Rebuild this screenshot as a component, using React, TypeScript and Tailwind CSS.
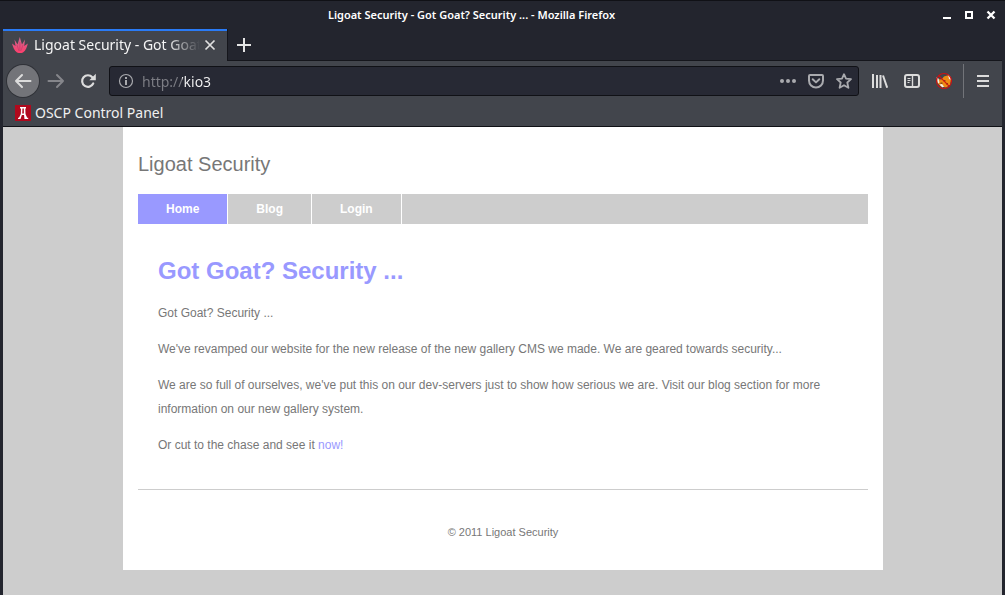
import type { ReactNode } from "react";

const chromeFont = "font-['Noto_Sans',sans-serif]";

function IconButton({ label, className = "", children }: { label: string; className?: string; children: ReactNode }) {
  return (
    <button type="button" aria-label={label} className={`flex h-8 w-8 shrink-0 items-center justify-center ${className}`}>
      {children}
    </button>
  );
}

function TitleBar() {
  return (
    <header className="relative flex h-7 items-center justify-end border-t border-[#101116] pr-[3px]">
      <h1 className="absolute inset-x-0 pr-[62px] text-center text-[11px] leading-4 font-semibold text-white">
        Ligoat Security - Got Goat? Security ... - Mozilla Firefox
      </h1>
      <div className="relative flex text-white">
        <button type="button" aria-label="Minimize" className="flex h-6 w-[22px] items-center justify-center">
          <svg width="10" height="10" viewBox="0 0 10 10"><path d="M1 7h8v2H1z" fill="currentColor" /></svg>
        </button>
        <button type="button" aria-label="Maximize" className="flex h-6 w-[22px] items-center justify-center">
          <svg width="10" height="10" viewBox="0 0 10 10"><path d="M2 2h6v6H2z" fill="none" stroke="currentColor" strokeWidth="2" /></svg>
        </button>
        <button type="button" aria-label="Close window" className="flex h-6 w-[22px] items-center justify-center">
          <svg width="10" height="10" viewBox="0 0 10 10"><path d="M1.500 1.500l7 7M8.500 1.500l-7 7" fill="none" stroke="currentColor" strokeWidth="2.300" /></svg>
        </button>
      </div>
    </header>
  );
}

function TabStrip() {
  return (
    <div className="flex h-8">
      <div className="flex w-56 items-center border-t-2 border-[#2a7bf6] bg-[#42454c] pr-[7px] pb-0.5 pl-2">
        <svg width="18" height="18" viewBox="0 0 18 18" className="shrink-0">
          <defs>
            <linearGradient id="lotus" x1="0" y1="0" x2="0" y2="1">
              <stop offset="0" stopColor="#c9688f" />
              <stop offset="1" stopColor="#ff3e6c" />
            </linearGradient>
          </defs>
          <path
            d="M6 16.500C3 14.500 2 10.500 1 7.500L4.500 10L3.500 3.500L6.500 8.500L8.800 1L11 8.500L14 3.500L13.200 10L16.800 7.500C16 10.500 15 14.500 12 16.500C10 17.200 8 17.200 6 16.500Z"
            fill="url(#lotus)"
          />
          <path d="M6 9l2 6M8.900 6v9M12 9l-2.200 6" stroke="#b83a6a" strokeWidth=".6" fill="none" />
        </svg>
        <span className="ml-[5px] min-w-0 flex-1 overflow-hidden mask-r-from-80% mask-r-to-100% text-[14px] leading-5 whitespace-nowrap text-[#f5f5f5]">
          Ligoat Security - Got Goat? Security ...
        </span>
        <button type="button" aria-label="Close tab" className="flex h-6 w-5 shrink-0 items-center justify-center text-[#e0e0e0]">
          <svg width="12" height="12" viewBox="0 0 12 12"><path d="M1.500 1.500l9 9M10.500 1.500l-9 9" stroke="currentColor" strokeWidth="1.700" fill="none" /></svg>
        </button>
      </div>
      <div className="flex flex-1 border-b border-l border-[#15161c]">
        <IconButton label="New tab" className="text-[#e5e5e5]">
          <svg width="14" height="14" viewBox="0 0 14 14"><path d="M7 0v14M0 7h14" stroke="currentColor" strokeWidth="2" /></svg>
        </IconButton>
      </div>
    </div>
  );
}

function AddressBar() {
  return (
    <form className="ml-[5px] flex h-[30px] min-w-0 flex-1 items-center rounded-[3px] border border-[#101116] bg-[#272934] text-[#a9aaae]" onSubmit={(e) => e.preventDefault()}>
      <button type="button" aria-label="Site information" className="flex w-8 shrink-0 justify-center">
        <svg width="16" height="16" viewBox="0 0 16 16">
          <circle cx="8" cy="8" r="6.500" fill="none" stroke="currentColor" strokeWidth="1.200" />
          <path d="M7 4h2v2H7zM7 7h2v5H7z" fill="currentColor" />
        </svg>
      </button>
      <input
        aria-label="Address"
        defaultValue="http://kio3"
        className="h-7 min-w-0 flex-1 bg-[linear-gradient(to_right,#7d7e85_40px,#f5f5f6_40px)] bg-clip-text text-[14px] leading-5 text-transparent outline-none"
      />
      <div className="flex items-center">
        <button type="button" aria-label="Page actions" className="flex h-7 w-7 items-center justify-center">
          <svg width="16" height="16" viewBox="0 0 16 16" fill="currentColor"><circle cx="2" cy="8" r="2" /><circle cx="8" cy="8" r="2" /><circle cx="14" cy="8" r="2" /></svg>
        </button>
        <button type="button" aria-label="Save to Pocket" className="flex h-7 w-7 items-center justify-center">
          <svg width="16" height="16" viewBox="0 0 16 16" fill="none" stroke="currentColor" strokeWidth="2">
            <path d="M2 2h12a1 1 0 0 1 1 1v4.500a7 7 0 0 1-14 0V3a1 1 0 0 1 1-1z" />
            <path d="M4.700 6.200L8 9.400l3.300-3.200" strokeLinecap="round" strokeLinejoin="round" />
          </svg>
        </button>
        <button type="button" aria-label="Bookmark this page" className="flex h-7 w-7 items-center justify-center">
          <svg width="16" height="16" viewBox="0 0 16 16" fill="none" stroke="currentColor" strokeWidth="1.800" strokeLinejoin="round">
            <path d="M8 1.200l2 4.500 5 .5-3.700 3.300 1.100 5.300L8 12.200l-4.400 2.600 1.100-5.300L1 6.200l5-.5z" />
          </svg>
        </button>
      </div>
    </form>
  );
}

function FoxIcon() {
  return (
    <svg width="18" height="18" viewBox="0 0 18 18">
      <path d="M2.500 7l4 .5L9 4.500 14 3l2 5-1 5-4 2.500-5-1L2.500 11z" fill="#ee8a14" />
      <path d="M1.500 5l2 1.500 1 4-1.500 1zM13 2.500l2 1.500 1.300 4-2.300-1zM4.500 12.500l2.500-.5 2 2.500-1.500 1z" fill="#f2efe9" />
      <path d="M8.500 8h2v1.500h-2zM5.500 10.500h2v1.500h-2zM11 11h2v1.500h-2z" fill="#8a4a12" />
      <circle cx="9" cy="9" r="7.500" fill="none" stroke="#cf1111" strokeWidth="1.100" />
      <path d="M3.700 3.700l10.600 10.600" stroke="#cf1111" strokeWidth="1.100" />
    </svg>
  );
}

function Toolbar() {
  return (
    <div className="flex h-10 items-center bg-[#42454c] pr-[3px] pl-1 text-[#dcdcdc]">
      <IconButton label="Back" className="rounded-full bg-[#737479] ring-1 ring-[#303238]">
        <svg width="18" height="16" viewBox="0 0 18 16" fill="none" stroke="currentColor" strokeWidth="2" strokeLinecap="round" strokeLinejoin="round"><path d="M8 2L2 8l6 6M2 8h14.500" /></svg>
      </IconButton>
      <IconButton label="Forward" className="ml-px text-[#85868b]">
        <svg width="18" height="16" viewBox="0 0 18 16" fill="none" stroke="currentColor" strokeWidth="2" strokeLinecap="round" strokeLinejoin="round"><path d="M10 2l6 6-6 6M16 8H1.500" /></svg>
      </IconButton>
      <IconButton label="Reload">
        <svg width="16" height="16" viewBox="0 0 16 16"><path d="M13.200 10.500A5.800 5.800 0 1 1 12.300 4.200" fill="none" stroke="currentColor" strokeWidth="2.200" strokeLinecap="round" /><path d="M15.800 .8v6.400H9.300z" fill="currentColor" /></svg>
      </IconButton>
      <AddressBar />
      <div className="flex items-center pl-[5px]">
        <IconButton label="Library">
          <svg width="16" height="16" viewBox="0 0 16 16" fill="none" stroke="currentColor" strokeWidth="2"><path d="M1 1v14M5 2v13M8.500 2v13M11 2.500l4.200 12.300" /></svg>
        </IconButton>
        <IconButton label="Sidebars">
          <svg width="16" height="16" viewBox="0 0 16 16" fill="none" stroke="currentColor"><rect x="1" y="2" width="14" height="12" rx="2" strokeWidth="2" /><path d="M8.500 2v12" strokeWidth="1.400" /><path d="M3.500 5.500h3M3.500 7.500h3M3.500 9.500h2" strokeWidth="1" /></svg>
        </IconButton>
        <IconButton label="Proxy settings"><FoxIcon /></IconButton>
        <div className="ml-[3px] h-[34px] w-px bg-[#727479]" />
        <IconButton label="Open menu" className="ml-[3px]">
          <svg width="12" height="12" viewBox="0 0 12 12"><path d="M0 1h12M0 6h12M0 11h12" stroke="currentColor" strokeWidth="2" /></svg>
        </IconButton>
      </div>
    </div>
  );
}

function BookmarksBar() {
  return (
    <nav aria-label="Bookmarks" className="flex h-[26px] items-center border-b border-[#101116] bg-[#42454c] pb-0.5 pl-3">
      <a href="#oscp" className="flex items-center gap-1 text-[14px] leading-5 text-[#f0f0f0]">
        <svg width="16" height="16" viewBox="0 0 16 16">
          <path d="M0 0h16v16H0z" fill="#b0091d" />
          <path d="M5 2h6v1.500H5zM6 3h1.500l-.3 6-1.700 5H3v-1.200h1L5.800 9zM8.800 3h1.500l.2 6 1.700 3.800h1V14H9.500L8.900 9z" fill="#fff" />
          <path d="M6.500 8.500h3V10h-3z" fill="#fff" />
        </svg>
        OSCP Control Panel
      </a>
    </nav>
  );
}

const navLinks = [
  { label: "Home", active: true },
  { label: "Blog", active: false },
  { label: "Login", active: false },
];

function Website() {
  return (
    <div className="flex-1 bg-[#cdcdcd] pl-px font-['Liberation_Sans',sans-serif] text-[12px] leading-6 text-[#777]">
      <div className="mx-auto w-full max-w-[760px] bg-white px-[15px] pb-[26px]">
        <div className="pt-[22px] pb-[15px] text-[20px] leading-[30px]">Ligoat Security</div>
        <nav aria-label="Site" className="flex h-[30px] bg-[#cdcdcd] text-[12px] leading-[30px] font-bold text-white">
          {navLinks.map((link) => (
            <a key={link.label} href={`#${link.label.toLowerCase()}`} className={`border-r border-white px-7 ${link.active ? "bg-[#9999ff]" : ""}`}>
              {link.label}
            </a>
          ))}
        </nav>
        <main className="px-5 pt-[35px] pb-8">
          <h2 className="text-[24px] leading-6 font-bold text-[#9999ff]">Got Goat? Security ...</h2>
          <div className="mt-[18px] flex flex-col gap-3">
            <p>Got Goat? Security ...</p>
            <p>We've revamped our website for the new release of the new gallery CMS we made. We are geared towards security...</p>
            <p>We are so full of ourselves, we've put this on our dev-servers just to show how serious we are. Visit our blog section for more information on our new gallery system.</p>
            <p>Or cut to the chase and see it <a href="#gallery" className="text-[#9999ff]">now!</a></p>
          </div>
        </main>
        <footer className="border-t border-[#cdcdcd] pt-[30px] text-center text-[11px]">© 2011 Ligoat Security</footer>
      </div>
    </div>
  );
}

export default function App() {
  return (
    <div className="flex min-h-screen flex-col bg-[#23252e]">
      <div className={chromeFont}><TitleBar /></div>
      <div className="mx-[3px] flex flex-1 flex-col">
        <div className={chromeFont}>
          <div className="pt-px"><TabStrip /></div>
          <Toolbar />
          <BookmarksBar />
        </div>
        <Website />
      </div>
    </div>
  );
}
